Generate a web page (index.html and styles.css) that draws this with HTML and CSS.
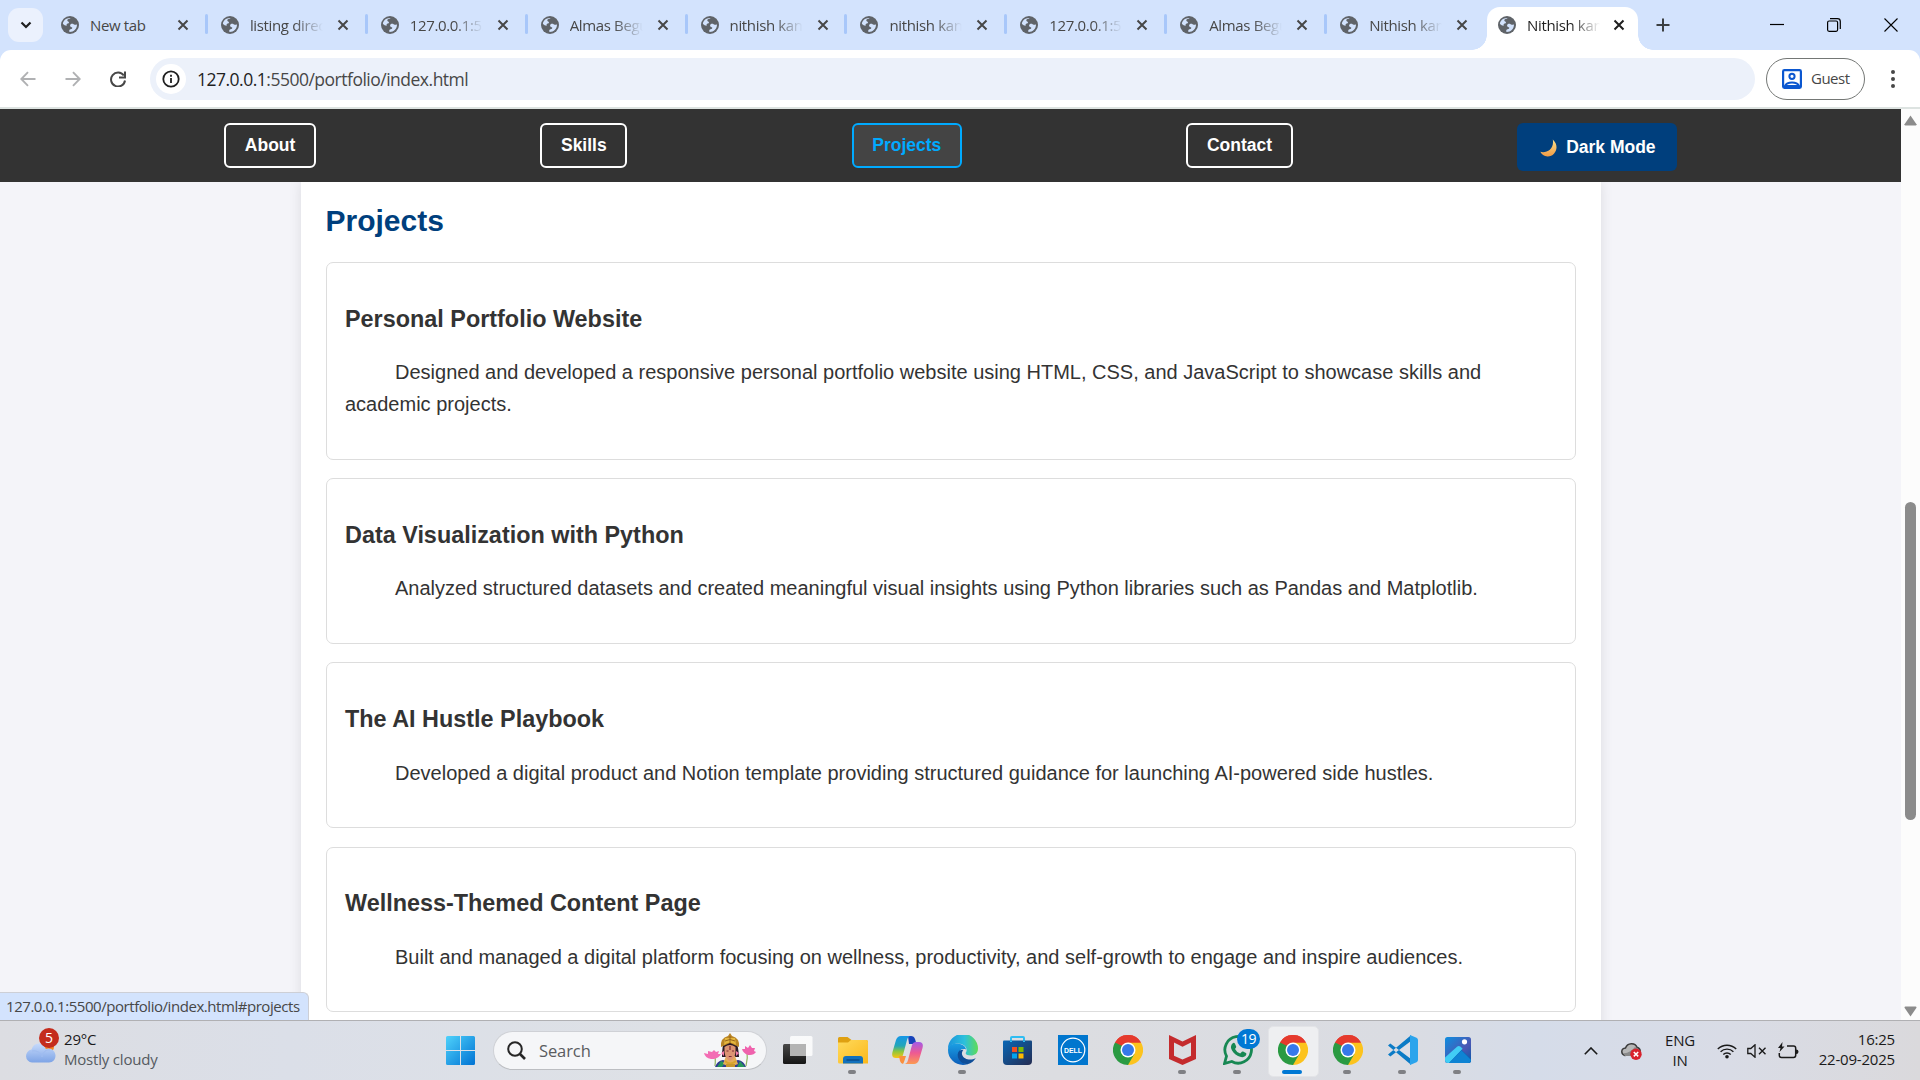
FILE: index.html
```html
<!DOCTYPE html>
<html lang="en">
<head>
<meta charset="utf-8">
<title>Nithish kanna portfolio</title>
<link rel="stylesheet" href="styles.css">
</head>
<body>
<svg class="defs" aria-hidden="true">
  <linearGradient id="g-win" x1="0" y1="0" x2="1" y2="1"><stop offset="0" stop-color="#4fd2fb"/><stop offset="1" stop-color="#0072d3"/></linearGradient>
  <linearGradient id="g-cloud" x1="0" y1="0" x2="0" y2="1"><stop offset="0" stop-color="#c6dafb"/><stop offset="1" stop-color="#7ea4e6"/></linearGradient>
  <linearGradient id="g-folder" x1="0" y1="0" x2="1" y2="1"><stop offset="0" stop-color="#ffda5c"/><stop offset="1" stop-color="#fbb81a"/></linearGradient>
  <linearGradient id="g-cop1" x1="0" y1="0" x2="0" y2="1"><stop offset="0" stop-color="#1596e8"/><stop offset=".45" stop-color="#22a6b8"/><stop offset=".7" stop-color="#8cc63e"/><stop offset="1" stop-color="#fbc412"/></linearGradient>
  <linearGradient id="g-cop2" x1="0" y1="0" x2="0" y2="1"><stop offset="0" stop-color="#a35be8"/><stop offset=".5" stop-color="#ee5a92"/><stop offset="1" stop-color="#fc9a52"/></linearGradient>
  <linearGradient id="g-edge1" x1="0" y1="0" x2="1" y2="0"><stop offset="0" stop-color="#1b94dd"/><stop offset=".55" stop-color="#2cc0dc"/><stop offset="1" stop-color="#5fdc55"/></linearGradient>
  <linearGradient id="g-edge2" x1="0" y1="0" x2="0" y2="1"><stop offset="0" stop-color="#1b9fe4"/><stop offset="1" stop-color="#0b5cb8"/></linearGradient>
  <linearGradient id="g-store" x1="0" y1="0" x2="1" y2="1"><stop offset="0" stop-color="#0867b6"/><stop offset="1" stop-color="#242c52"/></linearGradient>
  <linearGradient id="g-photo" x1="0" y1="0" x2="1" y2="1"><stop offset="0" stop-color="#0d8fe0"/><stop offset=".6" stop-color="#4a58b4"/><stop offset="1" stop-color="#0a58a8"/></linearGradient>
  <linearGradient id="g-dark" x1="0" y1="0" x2="0" y2="1"><stop offset="0" stop-color="#484848"/><stop offset="1" stop-color="#161616"/></linearGradient>
  <linearGradient id="g-moon" x1="0" y1="0" x2="0" y2="1"><stop offset="0" stop-color="#fbe08a"/><stop offset="1" stop-color="#f09b45"/></linearGradient>
  <symbol id="globe" viewBox="0 0 18 18"><circle cx="9" cy="9" r="9" fill="#5f6368"/><path d="M9.600 2c-1 1.300-3 .6-3.300 2.200-.2 1.300 1.700 1 1.700 2.300 0 1.200-2.200.8-2.400 2-.1.500.2.900 0 1.200C4.800 10 3 8.900 1.900 8 2 4.800 5 1.800 9.600 2zM10.400 7.800c1.700-.4 2.300.5 3.300.9 1.100.4 1.500-.5 2.300-.2C16 12.700 13 15.900 8.600 16c-.6-.7-.5-1.900.3-2.400.8-.6 2.200-.3 2.400-1.500.1-1-1.300-.9-1.900-1.600-.7-.8-.2-2.400 1-2.700z" fill="#d3e3fd"/></symbol>
  <symbol id="close" viewBox="0 0 12 12"><path d="M1.500 1.500l9 9M10.500 1.500l-9 9" stroke="currentColor" stroke-width="2" fill="none"/></symbol>
  <symbol id="chrome" viewBox="0 0 48 48"><path d="M24 24L3.200 12A24 24 0 0 1 44.800 12z" fill="#e53a2d"/><path d="M24 24L44.800 12A24 24 0 0 1 24 48z" fill="#fcc31e"/><path d="M24 24L24 48A24 24 0 0 1 3.200 12z" fill="#2a9a42"/><path d="M24 12h20.800L34.400 30z" fill="#fcc31e"/><path d="M34.400 30L24 48l-8-16z" fill="#2a9a42"/><path d="M24 12L13.600 30 3.200 12z" fill="#2a9a42"/><path d="M3.200 12A24 24 0 0 1 44.800 12H24L14 17z" fill="#e53a2d"/><circle cx="24" cy="24" r="12" fill="#fff"/><circle cx="24" cy="24" r="9.600" fill="#3679ea"/></symbol>
</svg>

<div class="tabstrip">
  <div class="tab-search"><svg width="12" height="8" viewBox="0 0 12 8"><path d="M1.500 1.500L6 6l4.500-4.500" fill="none" stroke="#1f1f1f" stroke-width="2.200"/></svg></div>
  <div class="tabs">
    <div class="tab"><svg class="globe"><use href="#globe"/></svg><span class="tab-title">New tab</span><svg class="close"><use href="#close"/></svg></div>
    <div class="tab"><svg class="globe"><use href="#globe"/></svg><span class="tab-title fade">listing direc</span><svg class="close"><use href="#close"/></svg></div>
    <div class="tab"><svg class="globe"><use href="#globe"/></svg><span class="tab-title fade">127.0.0.1:55</span><svg class="close"><use href="#close"/></svg></div>
    <div class="tab"><svg class="globe"><use href="#globe"/></svg><span class="tab-title fade">Almas Begu</span><svg class="close"><use href="#close"/></svg></div>
    <div class="tab"><svg class="globe"><use href="#globe"/></svg><span class="tab-title fade">nithish kan</span><svg class="close"><use href="#close"/></svg></div>
    <div class="tab"><svg class="globe"><use href="#globe"/></svg><span class="tab-title fade">nithish kan</span><svg class="close"><use href="#close"/></svg></div>
    <div class="tab"><svg class="globe"><use href="#globe"/></svg><span class="tab-title fade">127.0.0.1:55</span><svg class="close"><use href="#close"/></svg></div>
    <div class="tab"><svg class="globe"><use href="#globe"/></svg><span class="tab-title fade">Almas Begu</span><svg class="close"><use href="#close"/></svg></div>
    <div class="tab"><svg class="globe"><use href="#globe"/></svg><span class="tab-title fade">Nithish kan</span><svg class="close"><use href="#close"/></svg></div>
    <div class="tab active"><svg class="globe"><use href="#globe"/></svg><span class="tab-title fade">Nithish kan</span><svg class="close"><use href="#close"/></svg></div>
  </div>
  <svg class="new-tab" width="14" height="14" viewBox="0 0 14 14"><path d="M7 .5v13M.5 7h13" stroke="#3c4043" stroke-width="2"/></svg>
  <div class="window-controls">
    <svg width="14" height="14" viewBox="0 0 14 14"><path d="M0 6.500h14" stroke="#000" stroke-width="1.200"/></svg>
    <svg width="14" height="14" viewBox="0 0 14 14"><rect x=".6" y="3" width="10" height="10.300" rx="1.500" fill="none" stroke="#000" stroke-width="1.200"/><path d="M3 .7h7.500a2.800 2.800 0 0 1 2.800 2.800V11" fill="none" stroke="#000" stroke-width="1.200"/></svg>
    <svg width="14" height="14" viewBox="0 0 14 14"><path d="M.5.5l13 13M13.500.5l-13 13" stroke="#000" stroke-width="1.100"/></svg>
  </div>
</div>

<div class="toolbar">
  <div class="toolbar-inner">
    <svg class="nav-icon" width="16" height="16" viewBox="0 0 16 16"><path d="M15.500 8H1.500M8 1.200L1.300 8 8 14.800" fill="none" stroke="#b0b1b3" stroke-width="1.900"/></svg>
    <svg class="nav-icon" width="16" height="16" viewBox="0 0 16 16"><path d="M.5 8h14M8 1.200L14.700 8 8 14.800" fill="none" stroke="#b0b1b3" stroke-width="1.900"/></svg>
    <svg class="nav-icon" width="16" height="16" viewBox="0 0 16 16"><path d="M13.800 4.500A7 7 0 1 0 15 9.500" fill="none" stroke="#474747" stroke-width="2"/><path d="M15 .5v6H9" fill="none" stroke="#474747" stroke-width="2"/></svg>
    <div class="omnibox">
      <span class="site-info"><svg width="18" height="18" viewBox="0 0 18 18"><circle cx="9" cy="9" r="7.700" fill="none" stroke="#1f1f1f" stroke-width="1.800"/><path d="M9 8v5M9 4.800v1.900" stroke="#1f1f1f" stroke-width="1.800"/></svg></span>
      <span class="url"><b>127.0.0.1</b>:5500/portfolio/index.html</span>
    </div>
    <div class="guest"><svg width="20" height="20" viewBox="0 0 20 20"><rect x="1.100" y="1.100" width="17.800" height="17.800" rx="1.300" fill="none" stroke="#0b57d0" stroke-width="2.200"/><circle cx="10" cy="7.300" r="2.600" fill="none" stroke="#0b57d0" stroke-width="2"/><path d="M3 17c2-4.600 12-4.600 14 0z" fill="none" stroke="#0b57d0" stroke-width="2"/></svg><span>Guest</span></div>
    <svg class="menu" width="4" height="20" viewBox="0 0 4 20"><circle cx="2" cy="3" r="2" fill="#474747"/><circle cx="2" cy="10" r="2" fill="#474747"/><circle cx="2" cy="17" r="2" fill="#474747"/></svg>
  </div>
</div>

<div class="viewport">
  <div class="page">
    <nav class="site-nav">
      <a class="nav-link">About</a>
      <a class="nav-link">Skills</a>
      <a class="nav-link current">Projects</a>
      <a class="nav-link">Contact</a>
      <button class="theme-toggle"><svg width="18" height="18" viewBox="0 0 18 18"><path d="M12.800.4C20.500 7.500 15 17.800 7.500 17.500 4 17.400 1.500 15.500.3 12.800 6 14.500 14.500 10.800 12.800.4z" fill="url(#g-moon)"/></svg>Dark Mode</button>
    </nav>
    <main class="container">
      <h2>Projects</h2>
      <article class="card"><h3>Personal Portfolio Website</h3><p>Designed and developed a responsive personal portfolio website using HTML, CSS, and JavaScript to showcase skills and academic projects.</p></article>
      <article class="card"><h3>Data Visualization with Python</h3><p>Analyzed structured datasets and created meaningful visual insights using Python libraries such as Pandas and Matplotlib.</p></article>
      <article class="card"><h3>The AI Hustle Playbook</h3><p>Developed a digital product and Notion template providing structured guidance for launching AI-powered side hustles.</p></article>
      <article class="card"><h3>Wellness-Themed Content Page</h3><p>Built and managed a digital platform focusing on wellness, productivity, and self-growth to engage and inspire audiences.</p></article>
    </main>
  </div>
  <div class="scrollbar">
    <svg width="13" height="11" viewBox="0 0 13 11"><path d="M6.500.5L12.500 9.300q0 1.200-1 1.200h-10q-1 0-1-1.200z" fill="#8b8b8b"/></svg>
    <div class="thumb"></div>
    <svg class="down" width="13" height="11" viewBox="0 0 13 11"><path d="M6.500 10.500L12.500 1.700q0-1.200-1-1.200h-10q-1 0-1 1.200z" fill="#8b8b8b"/></svg>
  </div>
  <div class="status-bubble">127.0.0.1:5500/portfolio/index.html#projects</div>
</div>

<footer class="taskbar">
  <div class="weather">
    <div class="weather-icon">
      <svg width="31" height="22" viewBox="0 0 31 22"><circle cx="23" cy="6" r="6" fill="#f58220"/><path d="M7 21.500a6.500 6.500 0 0 1-.5-12.900C8 3.500 12 1.500 16 3c2.500.8 4 2.600 4.800 5C26 6 30.500 10 30.500 14.500c0 4-2.500 7-6.500 7z" fill="url(#g-cloud)"/><path d="M7 10c5-1 9 2 10 6 1-5 4-8 8-7" fill="none" stroke="#9fbcf0" stroke-width="1"/></svg>
      <span class="weather-badge">5</span>
    </div>
    <div class="weather-text"><span class="temp">29°C</span><span>Mostly cloudy</span></div>
  </div>
  <div class="apps">
    <div class="app"><svg width="29" height="29" viewBox="0 0 29 29"><path d="M1.500 0H14v14H0V1.500Q0 0 1.500 0zM15 0h12.500Q29 0 29 1.500V14H15zM0 15h14v14H1.500Q0 29 0 27.500zM15 15h14v12.500q0 1.500-1.500 1.500H15z" fill="url(#g-win)"/></svg></div>
    <div class="search">
      <svg width="19" height="19" viewBox="0 0 19 19"><circle cx="8" cy="8" r="6.800" fill="none" stroke="#262626" stroke-width="2"/><path d="M13 13l5 5" stroke="#262626" stroke-width="2.600"/></svg>
      <span>Search</span>
      <svg class="highlight" width="52" height="34" viewBox="0 0 52 34">
        <path d="M10 21q2 4 1 12M43 17q1 8-1 16" fill="none" stroke="#8fb560" stroke-width="1.200"/>
        <path d="M7 26q-6-1-7-6l4 1 0-3 4 1 2-2 2 2 3-1-1 3 3 0q-2 4-7 5z" fill="#f36db4"/><path d="M44 22q-5-2-6-6l3 0 0-3 3 2 2-3 2 3 3 0-1 3 2 1q-2 3-6 3z" fill="#ef62ad"/>
        <path d="M18 24q0-20 8-20t9 20z" fill="#2a1a26"/><path d="M17 14Q16 5 24 3l2-3 2 3q8 2 7 11l-9-4z" fill="#b98526"/><path d="M20 12q6-5 12 0l-1-7H21z" fill="#e4b63e"/><path d="M21 8q5-3 10 0M26 3v7" fill="none" stroke="#96641a" stroke-width="1"/>
        <path d="M11 34q2-6 8-7l7 2 8-2q6 1 8 7z" fill="#303b91"/><path d="M13 34l4-6 4 2-3 4zM33 34l3-6 5 6z" fill="#26975b"/><path d="M22 23h9l3 8q-8 4-15 0z" fill="#e4ad5b"/><path d="M20.500 14q5.500-4 11 0 1 11-5.500 14-6.500-3-5.500-14z" fill="#dc9473"/><path d="M26 13v4M22.500 18h2M28 18h2M24.800 23.500h2.800" stroke="#7c2933" stroke-width="1.200"/><path d="M20 18l-3 2 3 3M32 18l3 2-3 3" fill="#f27ba8"/><path d="M21 28q5 5 11 0" fill="none" stroke="#d8a52c" stroke-width="1.800"/><path d="M22 31h9v3h-9z" fill="#c7972e"/>
      </svg>
    </div>
    <div class="app"><svg width="30" height="28" viewBox="0 0 30 28"><rect y="8" width="23" height="20" rx="1.500" fill="url(#g-dark)"/><rect x="7" width="22.500" height="20" rx="1.500" fill="#fff" fill-opacity=".82"/><path d="M7 8h16v12H7z" fill="#b4b4b4"/></svg></div>
    <div class="app"><svg width="30" height="28" viewBox="0 0 30 28"><path d="M0 2.500Q0 1 1.500 1h8l4 3H28q2 0 2 2v5H0z" fill="#dfa011"/><path d="M0 6.500h10l3-2.500h15q2 0 2 2v21.500H1.500Q0 27.500 0 26z" fill="url(#g-folder)"/><path d="M5 27.500V23q0-3 3-3h14q3 0 3 3v4.500z" fill="#1271bd"/><path d="M8.500 24h13" stroke="#0a4d8c" stroke-width="1.500"/></svg><i class="dot"></i></div>
    <div class="app"><svg width="31" height="28" viewBox="0 0 31 28"><path d="M16 0h3q3 0 4 3l1.500 5H17z" fill="#1743ba"/><path d="M9 0h10q-3 0-4 4L11 19q-1 3-4 3H4q-5 0-3.500-6L4 4Q5.500 0 9 0z" fill="url(#g-cop1)"/><path d="M22 28H12q3 0 4-4l4-15q1-3 4-3h3q5 0 3.500 6L27 24q-1.500 4-5 4z" fill="url(#g-cop2)"/><path d="M7 20h7l-2 6-1 2q-2 0-3-3z" fill="#fa8f3d"/></svg></div>
    <div class="app"><svg width="30" height="30" viewBox="0 0 30 30"><path d="M0 14A15 15 0 0 1 30 13.500c0 5-3.500 7-7 7-4 0-6.500-1.500-4.800-3.500C20 13 16 8.500 10 8.500 5 8.500 1 11 0 14z" fill="url(#g-edge1)"/><path d="M0 15C0 10 5 8 9.500 8.500c5 .3 8 3 8.700 6C14 13 11 15 11 19c0 5 4 10 9 10Q17 30 15 30A15 15 0 0 1 0 15z" fill="url(#g-edge2)"/><path d="M11.500 15.500C7 20 11 29 19.500 29.300c4-1 7-4 8.300-6.300-5 3-12 1.500-13.600-3-.7-2 0-4 1.400-5.300-1.500 0-3 .2-4.100.8z" fill="#0f4e98"/></svg><i class="dot"></i></div>
    <div class="app"><svg width="29" height="29" viewBox="0 0 29 29"><path d="M8 6V2q0-1 1-1h11q1 0 1 1v4" fill="none" stroke="#2fbdf2" stroke-width="2"/><path d="M0 5.500q0-1 1-1h27q1 0 1 1V25q0 4-4 4H4q-4 0-4-4z" fill="url(#g-store)"/><path d="M8 4.500V6M21 4.500V6" stroke="#2fbdf2" stroke-width="2"/><path d="M9 11h5v5H9z" fill="#f25022"/><path d="M15.500 11h5v5h-5z" fill="#7fba00"/><path d="M9 17.500h5v5H9z" fill="#00a4ef"/><path d="M15.500 17.500h5v5h-5z" fill="#ffb900"/></svg></div>
    <div class="app"><svg width="30" height="30" viewBox="0 0 30 30"><path d="M0 0h30v30H0z" fill="#0076ce"/><circle cx="15" cy="15" r="11.800" fill="none" stroke="#fff" stroke-width="1.200"/><text class="dell" x="15" y="17.800" text-anchor="middle" textLength="18" lengthAdjust="spacingAndGlyphs">DELL</text></svg></div>
    <div class="app"><svg width="30" height="30"><use href="#chrome"/></svg></div>
    <div class="app"><svg width="27" height="30" viewBox="0 0 27 30"><path d="M0 0l13.500 6.500L27 0v24l-13.500 6L0 24zM5 7.500v13.300l8.500 3.700 8.500-3.700V7.500l-8.500 4.200z" fill="#c42b2d" fill-rule="evenodd"/></svg><i class="dot"></i></div>
    <div class="app"><svg width="30" height="30" viewBox="0 0 30 30"><path d="M1.500 28.500l2-7.300A13.300 13.300 0 1 1 8.800 26.500z" fill="none" stroke="#178853" stroke-width="2.800"/><path d="M9.500 8.500q1.500-1.500 2.500.2l1.200 2.800q.3.800-1.200 2.400 1.800 3.500 5.200 4.700l1.700-1.900q.5-.5 1.200-.2l2.800 1.400q1 .5.200 2.200c-1.500 2.600-5 2.600-8.100.9-3.500-1.800-6.300-5-7-8-.3-1.800.5-3.500 1.500-4.500z" fill="#178853"/></svg><span class="app-badge">19</span><i class="dot"></i></div>
    <div class="app selected"><svg width="30" height="30"><use href="#chrome"/></svg><i class="dot"></i></div>
    <div class="app"><svg width="30" height="30"><use href="#chrome"/></svg><i class="dot"></i></div>
    <div class="app"><svg width="30" height="30" viewBox="0 0 30 30"><path d="M0 10.500l2.300-2L23 24v5.700zM0 19.500l2.300 2L23 6V.3z" fill="#0b7bc6"/><path d="M22 0l6.500 2.800Q30 3.500 30 5v20q0 1.500-1.500 2.200L22 30z" fill="#2ba4ec"/><path d="M22 7.500v15L12.500 15z" fill="#dcdfe7"/></svg><i class="dot"></i></div>
    <div class="app"><svg width="26" height="26" viewBox="0 0 26 26"><rect width="26" height="26" rx="2.500" fill="url(#g-photo)"/><path d="M2 26L12.500 12.500q1.800-1.500 3.600 0L26 22v1q0 3-3 3z" fill="#0b67b8"/><path d="M0 20.500L12 9.800q1.800-1.500 3.600 0l2 2L4 26H3q-3 0-3-3z" fill="#41cdf5"/><path d="M11 19l5.500-5.500L26 23q0 3-3 3H4z" fill="#0e83d3"/><circle cx="19.500" cy="4.800" r="2.600" fill="#fff"/></svg><i class="dot"></i></div>
  </div>
  <div class="tray">
    <svg class="chev" width="14" height="8" viewBox="0 0 14 8"><path d="M.8 7.200L7 1l6.200 6.200" fill="none" stroke="#1a1a1a" stroke-width="1.600"/></svg>
    <svg class="cloud" width="21" height="18" viewBox="0 0 21 18"><path d="M4 13.500C-.5 12-.2 6.500 4.500 6 6.500.5 14 .2 16 5.200c3 1 3.500 3 3 5z" fill="#b7b7b7" stroke="#3c3c3c" stroke-width="1.500"/><path d="M2 11q6 1 12-6l3 2-3 7H4z" fill="#888"/><circle cx="15" cy="12.200" r="5.700" fill="#d9222c"/><path d="M12.800 10l4.400 4.400M17.200 10l-4.400 4.400" stroke="#fff" stroke-width="1.500"/></svg>
    <div class="lang"><span>ENG</span><span>IN</span></div>
    <svg class="wifi" width="20" height="16" viewBox="0 0 20 16"><path d="M.8 6a13 13 0 0 1 18.400 0M3.600 8.800a9 9 0 0 1 12.800 0M6.300 11.500a5.200 5.200 0 0 1 7.400 0" fill="none" stroke="#1a1a1a" stroke-width="1.400"/><circle cx="10" cy="13.800" r="1.800" fill="#1a1a1a"/></svg>
    <svg class="vol" width="20" height="14" viewBox="0 0 20 14"><path d="M.8 4.500h3L8 .8v12.400L3.800 9.500h-3z" fill="none" stroke="#1a1a1a" stroke-width="1.300"/><path d="M12 3.800l6.500 6.500M18.500 3.800L12 10.300" stroke="#1a1a1a" stroke-width="1.400"/></svg>
    <svg class="batt" width="21" height="17" viewBox="0 0 21 17"><path d="M9 4h6.500q2.200 0 2.200 2.200v7q0 2.200-2.200 2.200H3.500q-2.200 0-2.200-2.200V11" fill="none" stroke="#1a1a1a" stroke-width="1.500"/><path d="M18 7.500q2.500 0 2.500 2.300T18 12z" fill="#1a1a1a"/><path d="M4.500 0L0 6h2.500L1.500 10 6.500 4.500H4z" fill="#1a1a1a"/></svg>
    <div class="clock"><span>16:25</span><span>22-09-2025</span></div>
  </div>
</footer>
</body>
</html>
```
FILE: styles.css
```css
* { box-sizing: border-box; }
body {
  margin: 0;
  width: 1920px;
  height: 1080px;
  overflow: hidden;
  display: flex;
  flex-direction: column;
  font-family: "Open Sans", "Noto Sans", sans-serif;
  background: #fff;
}
svg { display: block; flex: none; }
.defs { position: absolute; width: 0; height: 0; }

/* browser tabs */
.tabstrip { height: 50px; flex: none; background: #d3e3fd; display: flex; align-items: center; }
.tab-search {
  width: 35px; height: 34px; margin-left: 8px; border-radius: 11px;
  background: #ebf1fd; display: flex; align-items: center; justify-content: center;
}
.tabs { display: flex; margin-left: 5px; align-self: stretch; }
.tab {
  width: 159.900px; height: 50px; padding-left: 13px; display: flex; align-items: center;
  position: relative; color: #474747; font-size: 15px;
}
.tab:not(.active)::after {
  content: ""; position: absolute; right: 0; top: 14px; width: 3px; height: 20px;
  border-radius: 2px; background: #a8c7fa;
}
.tab:nth-last-child(2)::after { display: none; }
.globe { width: 18px; height: 18px; }
.tab-title { width: 76px; margin-left: 11px; margin-right: 11px; white-space: nowrap; letter-spacing: -.35px; }
.fade { -webkit-mask-image: linear-gradient(90deg, #000 58%, transparent 96%); mask-image: linear-gradient(90deg, #000 58%, transparent 96%); }
.close { width: 12px; height: 12px; }
.tab.active {
  width: 151px; height: 43px; margin-top: 7px; padding: 0 0 7px 11px; background: #fff;
  border-radius: 13px 13px 0 0; color: #1f1f1f;
}
.tab.active .tab-title { margin-right: 10px; }
.tab.active::before, .tab.active::after {
  content: ""; position: absolute; bottom: 0; width: 15px; height: 15px;
}
.tab.active::before { left: -15px; background: radial-gradient(circle at 0 0, transparent 14.500px, #fff 15px); }
.tab.active::after { right: -15px; background: radial-gradient(circle at 100% 0, transparent 14.500px, #fff 15px); }
.new-tab { margin-left: 18px; }
.window-controls { margin-left: auto; margin-right: 22px; display: flex; gap: 43px; }

/* address bar */
.toolbar { height: 59px; flex: none; background: #d3e3fd; }
.toolbar-inner {
  height: 59px; background: #fff; border-radius: 11px 11px 0 0; border-bottom: 2px solid #dde3e1;
  padding: 0 25px 0 20px; display: flex; align-items: center;
}
.nav-icon { margin-right: 29px; }
.omnibox {
  width: 1605px; height: 42px; margin-left: -5px; border-radius: 21px; background: #ecf1fa;
  display: flex; align-items: center; padding-left: 6px;
}
.site-info { width: 30px; height: 30px; border-radius: 50%; background: #fff; display: flex; align-items: center; justify-content: center; }
.url { margin-left: 11px; font-size: 17.500px; color: #474747; letter-spacing: -.5px; white-space: nowrap; }
.url b { font-weight: 400; color: #1f1f1f; }
.guest {
  width: 99px; height: 42px; margin-left: 11px; border: 1px solid #747775; border-radius: 21px;
  display: flex; align-items: center; gap: 9px; padding-left: 15px; font-size: 15px; color: #474747; letter-spacing: -.5px;
}
.guest span { margin-top: -2px; }
.menu { margin-left: auto; }

/* page viewport */
.viewport { height: 911px; flex: none; display: flex; position: relative; overflow: hidden; }
.page {
  width: 1901px; height: 911px; overflow: hidden; background: #f4f4f9; color: #333;
  font-family: "Liberation Sans", Arial, sans-serif; font-size: 20px; line-height: 32px;
}
.site-nav {
  position: relative; z-index: 1; height: 73px; background: #333; display: flex; align-items: center; justify-content: space-evenly;
}
.nav-link {
  height: 45px; padding: 0 18.750px; border: 2px solid #fff; border-radius: 6px; color: #fff;
  font-size: 17.500px; font-weight: 700; line-height: 40px;
}
.nav-link.current { color: #0af; border-color: #0af; background: #444; }
.theme-toggle {
  width: 160px; height: 48px; margin: 2px 0 0; padding: 2px 0 0 2px; border: 0; border-radius: 6px; background: #003f7d; color: #fff;
  font: 700 17.500px "Liberation Sans", Arial, sans-serif; display: flex; align-items: center; justify-content: center; gap: 8px;
}
.container {
  width: 1300px; height: 900px; margin: 0 auto; padding: 18px 25px; background: #fff; box-shadow: 0 0 12px rgba(0, 0, 0, .1);
}
.container h2 { margin: 0 0 21px; font-size: 30px; line-height: 41px; color: #003f7d; }
.card { padding: 18.500px; margin-bottom: 18.400px; border: 1px solid #ddd; border-radius: 7px; }
.card h3 { margin: 23.400px 0; font-size: 23.400px; line-height: 28px; }
.card p { margin: 0 0 20px; text-indent: 50px; }
.scrollbar { width: 19px; background: #fcfcfc; display: flex; flex-direction: column; align-items: center; padding: 6px 0 3px; }
.thumb { width: 11px; height: 318px; margin-top: 376px; border-radius: 6px; background: #8b8b8b; }
.down { margin-top: auto; }
.status-bubble {
  position: absolute; left: 0; bottom: 0; width: 309px; height: 28px; padding-left: 6px; background: #d3e3fd;
  border: 1px solid #cdcfd6; border-width: 1px 1px 0 0; border-radius: 0 6px 0 0; color: #474747;
  font-size: 15px; line-height: 27px; letter-spacing: -.45px; white-space: nowrap;
}

/* desktop taskbar */
.taskbar {
  height: 60px; flex: none; border-top: 1px solid #b0b0b3; display: flex;
  background: linear-gradient(90deg, #dcdde2 0, #dbdfe8 15%, #dee1e6 35%, #dcdde1 55%, #dadce2 73%, #d5dce9 80%, #d9dce6 90%, #dad9dc 100%);
}
.weather { width: 433px; padding-left: 25px; display: flex; }
.weather-icon { width: 39px; height: 59px; padding-top: 20px; position: relative; }
.weather-badge {
  position: absolute; left: 14px; top: 7px; width: 20px; height: 20px; border-radius: 50%;
  background: #c42b1c; color: #fff; font-size: 14px; line-height: 20px; text-align: center;
}
.weather-text { display: flex; flex-direction: column; padding-top: 8px; font-size: 15px; line-height: 20px; color: #555a60; letter-spacing: -.2px; }
.weather-text .temp { color: #1a1a1a; }
.apps { display: flex; align-items: center; height: 58px; }
.app { width: 55px; height: 58px; display: flex; align-items: center; justify-content: center; position: relative; }
.app.selected::before {
  content: ""; position: absolute; left: 3px; top: 5px; width: 49px; height: 49px; border-radius: 5px; background: #eeeff1; border: 1px solid #e3e4e7;
}
.app.selected svg { position: relative; }
.dot { position: absolute; bottom: 5px; left: 23px; width: 8px; height: 4px; border-radius: 2px; background: #7f8084; }
.selected .dot { left: 17px; width: 20px; background: #0078d4; }
.app-badge {
  position: absolute; left: 27px; top: 8px; width: 23px; height: 20px; border-radius: 10px; background: #0078d4;
  color: #fff; font-size: 14px; line-height: 20px; text-align: center; letter-spacing: -.6px;
}
.dell { font: 700 8px "Liberation Sans", sans-serif; fill: #fff; }
.search {
  width: 274px; height: 39px; margin: 0 3px 0 5px; border-radius: 20px; background: #f5f6f8; border: 1px solid #cfd1d6; border-bottom-color: #bcbec2;
  display: flex; align-items: center; padding-left: 13px; font-size: 16.500px; color: #5a5c60; letter-spacing: -.1px;
}
.search span { margin-left: 13px; }
.highlight { margin-left: auto; margin-right: 10px; }
.tray { margin-left: auto; margin-right: 25px; display: flex; align-items: center; height: 59px; font-size: 15px; line-height: 20px; color: #1a1a1a; letter-spacing: -.2px; }
.lang, .clock { display: flex; flex-direction: column; margin-bottom: 3px; }
.lang { width: 30px; align-items: center; margin-left: 23px; margin-right: 22px; margin-bottom: 1px; }
.cloud { margin-left: 23px; }
.vol { margin-left: 10px; }
.batt { margin-left: 11px; }
.clock { width: 78px; align-items: flex-end; margin-left: 18px; white-space: nowrap; }
```
